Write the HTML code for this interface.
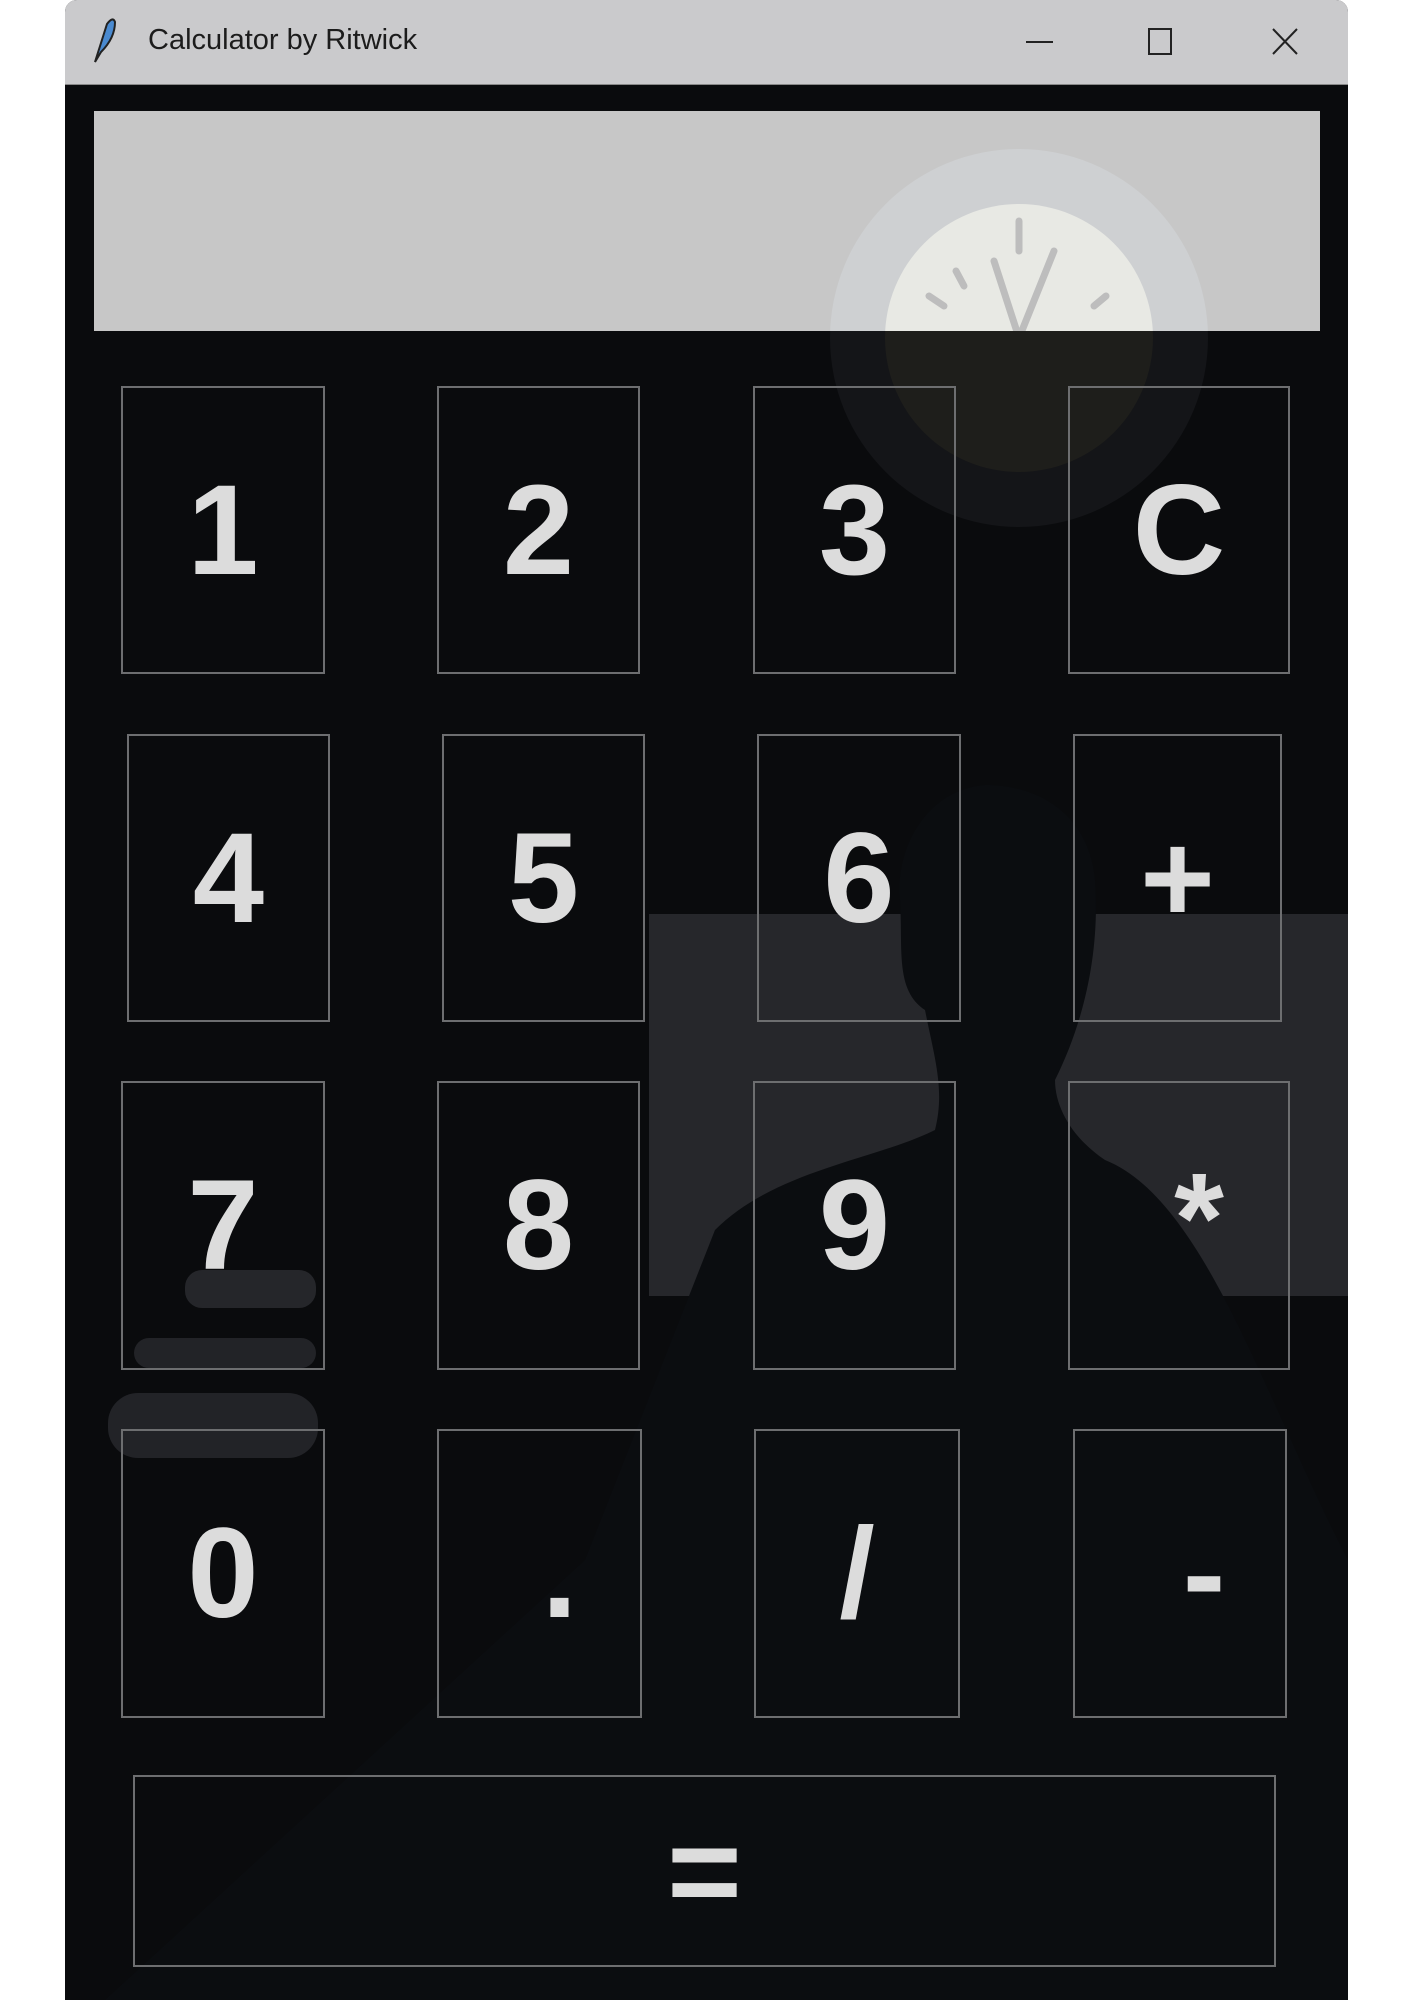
<!DOCTYPE html>
<html><head><meta charset="utf-8"><style>
html,body{margin:0;padding:0;background:#fff;width:1414px;height:2000px;overflow:hidden}
.win{position:absolute;left:65px;top:0;width:1283px;height:2000px;background:#0a0b0d;border-radius:12px 12px 0 0;overflow:hidden}
.title{position:absolute;left:0;top:0;width:1283px;height:84px;background:#cacacc;border-bottom:1px solid #888}
.title .t{position:absolute;left:83px;top:24px;font:29px "Liberation Sans",sans-serif;color:#1c1c1c}
.disp{position:absolute;left:29px;top:111px;width:1226px;height:220px;background:#c7c7c7}
.b{position:absolute;border:2px solid #6d6e70;box-sizing:border-box;display:flex;align-items:center;justify-content:center;font:bold 128px "Liberation Sans",sans-serif;color:#dcdcdc}
svg{position:absolute;left:0;top:0}
</style></head><body>
<div class="win">
<svg width="1283" height="2000">
<rect x="584" y="914" width="699" height="382" fill="#26272b"/>
<path d="M920 785 C860 790 830 850 835 900 C838 950 830 990 860 1010 C870 1060 880 1090 870 1130 C810 1160 710 1170 650 1230 L520 1560 L40 2000 L1283 2000 L1283 1560 C1200 1400 1140 1200 1040 1160 C1010 1140 990 1110 990 1080 C1020 1020 1035 950 1030 880 C1025 820 980 785 920 785Z" fill="#0b0d10"/>
<rect x="120" y="1270" width="131" height="38" rx="17" fill="#25262a"/>
<rect x="69" y="1338" width="182" height="30" rx="15" fill="#222327"/>
<rect x="43" y="1393" width="210" height="65" rx="30" fill="#222327"/>
<circle cx="954" cy="338" r="189" fill="#141518"/>
<circle cx="954" cy="338" r="134" fill="#1e1e1b"/>
</svg>
<div class="title"><svg width="40" height="60" style="left:20px;top:14px"><path d="M10 48 L22 10 Q28 2 30 8 Q30 24 16 38 Z" fill="#4a8ad0" stroke="#222" stroke-width="2"/></svg><span class="t">Calculator by Ritwick</span>
<svg width="1283" height="84"><line x1="961" y1="42" x2="988" y2="42" stroke="#222" stroke-width="2"/><rect x="1084" y="29" width="22" height="25" fill="none" stroke="#222" stroke-width="2"/><path d="M1208 29 L1232 54 M1232 29 L1208 54" stroke="#222" stroke-width="2"/></svg></div>
<div class="disp"><svg width="1226" height="220"><circle cx="925" cy="227" r="189" fill="#ced0d2"/><circle cx="925" cy="227" r="134" fill="#e8e9e4"/><g stroke="#bdbdbd" stroke-width="7" stroke-linecap="round"><line x1="925" y1="110" x2="925" y2="140"/><line x1="925" y1="227" x2="900" y2="150"/><line x1="925" y1="227" x2="960" y2="140"/><line x1="862" y1="160" x2="870" y2="175"/><line x1="835" y1="185" x2="850" y2="195"/><line x1="1012" y1="185" x2="1000" y2="195"/></g></svg></div>
</div>
<div class="b" style="left:121px;top:386px;width:204px;height:288px">1</div>
<div class="b" style="left:437px;top:386px;width:203px;height:288px">2</div>
<div class="b" style="left:753px;top:386px;width:203px;height:288px">3</div>
<div class="b" style="left:1068px;top:386px;width:222px;height:288px">C</div>
<div class="b" style="left:127px;top:734px;width:203px;height:288px">4</div>
<div class="b" style="left:442px;top:734px;width:203px;height:288px">5</div>
<div class="b" style="left:757px;top:734px;width:204px;height:288px">6</div>
<div class="b" style="left:1073px;top:734px;width:209px;height:288px">+</div>
<div class="b" style="left:121px;top:1081px;width:204px;height:289px">7</div>
<div class="b" style="left:437px;top:1081px;width:203px;height:289px">8</div>
<div class="b" style="left:753px;top:1081px;width:203px;height:289px">9</div>
<div class="b" style="left:1068px;top:1081px;width:222px;height:289px;align-items:flex-start"><span style="margin:62px 0 0 40px">*</span></div>
<div class="b" style="left:121px;top:1429px;width:204px;height:289px">0</div>
<div class="b" style="left:437px;top:1429px;width:205px;height:289px"><span style="margin-left:40px">.</span></div>
<div class="b" style="left:754px;top:1429px;width:206px;height:289px">/</div>
<div class="b" style="left:1073px;top:1429px;width:214px;height:289px"><span style="margin-left:48px">-</span></div>
<div class="b" style="left:133px;top:1775px;width:1143px;height:192px">=</div>
</body></html>
